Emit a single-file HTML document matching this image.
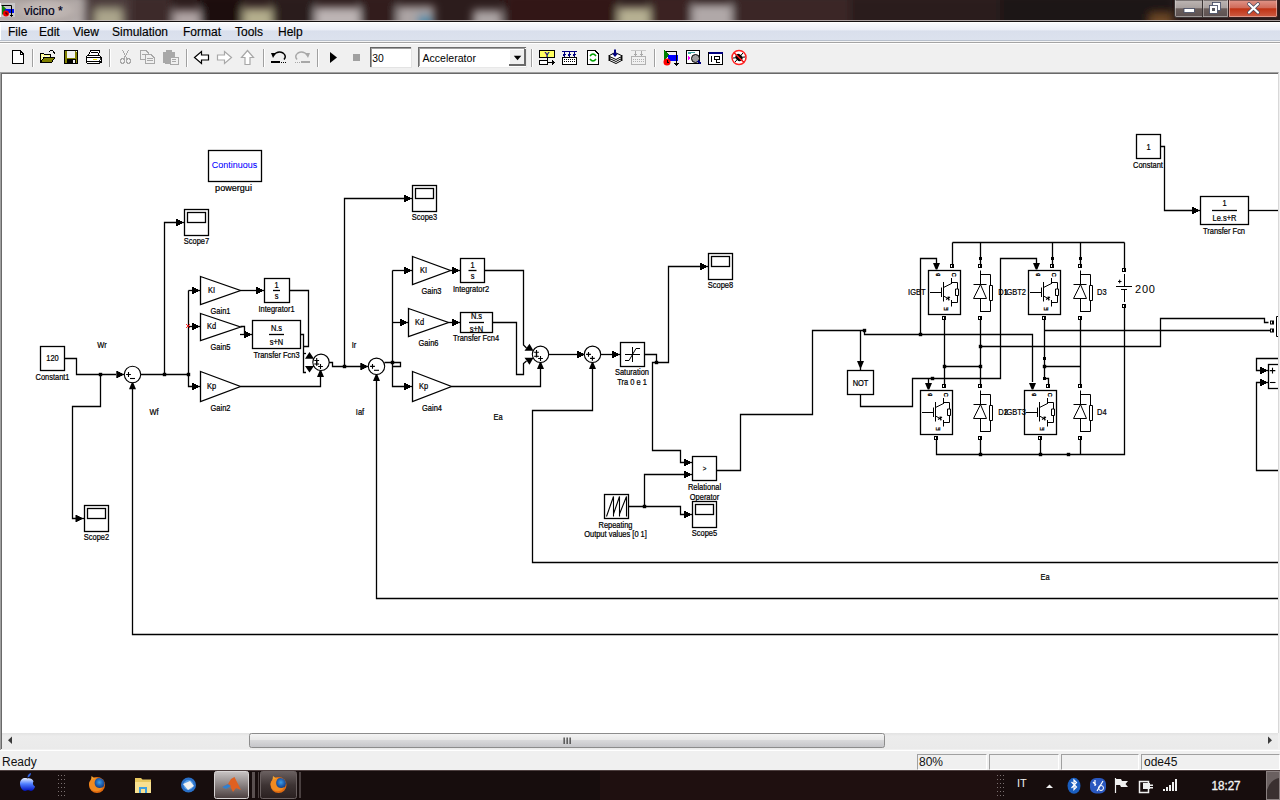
<!DOCTYPE html>
<html><head><meta charset="utf-8">
<style>
*{margin:0;padding:0;box-sizing:border-box}
html,body{width:1280px;height:800px;overflow:hidden;background:#f0f0f0;font-family:"Liberation Sans",sans-serif}
.abs{position:absolute}
#title{left:0;top:0;width:1280px;height:22px;background:#2a1a1a}
#title .t{left:24px;top:4px;font-size:12px;color:#000018;-webkit-text-stroke:0.2px #000018}
#menu{left:0;top:22px;width:1280px;height:19px;background:linear-gradient(#f8fafd 0,#eceff7 38%,#d9dfec 48%,#dce2ee 100%);border-top:1px solid #fff;border-bottom:1px solid #b8c0cc;box-shadow:inset 1px 0 0 #fff}
#menu span{position:absolute;top:2px;font-size:12px;color:#000;-webkit-text-stroke:0.15px #000}
#tool{left:0;top:41px;width:1280px;height:31px;background:#f0f0f0;border-top:1px solid #f4f4f4;box-shadow:inset 0 1px 0 #a4a4a4, inset 0 2px 0 #fff}
#canvas{left:0;top:72px;width:1279px;height:661px;background:#fff;border-top:1px solid #a0a0a0;border-left:1px solid #a0a0a0;border-right:1px solid #d8d8d8;box-shadow:inset 1px 1px 0 #696969}
#hscroll{left:2px;top:733px;width:1276px;height:17px;background:#ececec}
#status{left:0;top:750px;width:1280px;height:20px;background:#f0f0f0;border-top:1px solid #fff}
#status span{position:absolute;font-size:12px;color:#101010}
.pan{position:absolute;top:3px;height:16px;border:1px solid #c8c8c8;border-right-color:#fff;border-bottom-color:#fff;border-left-color:#a0a0a0;border-top-color:#a0a0a0}
#task{left:0;top:770px;width:1280px;height:30px;background:linear-gradient(90deg,#1c1010,#140c0c 500px,#1c1010 900px,#201212);border-top:1px solid #5a4a4a}
svg .f{fill:#000;stroke:none}
svg text{font-family:"Liberation Sans",sans-serif}
</style></head><body>
<div id="title" class="abs"><svg class="abs" style="left:0;top:0" width="1280" height="22" viewBox="0 0 1280 22"><defs><radialGradient id="glow" cx="0.5" cy="0.5" r="0.5"><stop offset="0" stop-color="#d4ccc8" stop-opacity="1"/><stop offset="0.6" stop-color="#c0b6b2" stop-opacity="0.85"/><stop offset="1" stop-color="#a09490" stop-opacity="0"/></radialGradient><linearGradient id="minb" x1="0" y1="0" x2="0" y2="1"><stop offset="0" stop-color="#bdb6b4"/><stop offset="0.45" stop-color="#a8a09e"/><stop offset="0.5" stop-color="#6a5e5c"/><stop offset="1" stop-color="#5c5050"/></linearGradient><linearGradient id="clsb" x1="0" y1="0" x2="0" y2="1"><stop offset="0" stop-color="#e0968a"/><stop offset="0.45" stop-color="#d06a58"/><stop offset="0.5" stop-color="#c03214"/><stop offset="1" stop-color="#d06048"/></linearGradient></defs><filter id="bl" x="-50%" y="-50%" width="200%" height="200%"><feGaussianBlur stdDeviation="4"/></filter><rect x="0" y="0" width="1280" height="21" fill="#2c1c1c"/><g filter="url(#bl)"><rect x="80" y="-6" width="52" height="40" fill="#4e3e3c"/><rect x="130" y="-6" width="42" height="40" fill="#3e2c2c"/><rect x="200" y="-6" width="42" height="40" fill="#1e1010"/><rect x="272" y="-6" width="42" height="40" fill="#2a1a1a"/><rect x="360" y="-6" width="36" height="40" fill="#301c1c"/><rect x="505" y="-6" width="112" height="40" fill="#301616"/><rect x="650" y="-6" width="42" height="40" fill="#3a2424"/><rect x="732" y="-6" width="118" height="40" fill="#3a2828"/><rect x="850" y="-6" width="150" height="40" fill="#2c1c1c"/><rect x="1000" y="-6" width="175" height="40" fill="#1e1212"/><rect x="-10" y="-6" width="94" height="40" fill="#b4acaa"/><rect x="95" y="9" width="27" height="25" fill="#aca68c"/><rect x="173" y="10" width="27" height="24" fill="#b0a4a4"/><rect x="243" y="8" width="29" height="26" fill="#b4ae8c"/><rect x="315" y="7" width="45" height="27" fill="#bcb4b4"/><rect x="397" y="6" width="37" height="28" fill="#aca4a4"/><rect x="418" y="15" width="14" height="19" fill="#4a8aa8"/><rect x="473" y="10" width="29" height="24" fill="#aca4a4"/><rect x="618" y="7" width="32" height="27" fill="#b6b092"/><rect x="692" y="4" width="40" height="30" fill="#b0a8a8"/><rect x="1150" y="14" width="22" height="20" fill="#704828"/></g><rect x="0" y="20" width="1280" height="1" fill="#c8c0c0" opacity="0.8"/><rect x="0" y="21" width="1280" height="1" fill="#141010"/><ellipse cx="46" cy="10" rx="40" ry="14" fill="url(#glow)" opacity="0.6"/><rect x="1" y="3" width="14" height="14" fill="#c8c8c8"/><rect x="0" y="3" width="1" height="14" fill="#fff"/><path d="M2,5 L2,15 L7,9.5 Z" fill="#108010"/><rect x="5" y="9" width="9" height="4" fill="#0010f0"/><circle cx="6" cy="13.5" r="3" fill="#f00000"/><path d="M1.5,5.5 L11.5,5.5 L11.5,16" fill="none" stroke="#000" stroke-width="1"/><path d="M10,15 L11.5,16.5 L13,15" fill="none" stroke="#000" stroke-width="1"/><path d="M6,12 L6,14 L8,14" fill="none" stroke="#000" stroke-width="0.8"/><path d="M1174.5,0 L1174.5,15.5 Q1174.5,17.5 1176.5,17.5 L1228.5,17.5 L1228.5,0 Z" fill="url(#minb)" stroke="#3a3434" stroke-width="1"/><path d="M1175.5,0 L1175.5,15.5 Q1175.5,16.5 1176.5,16.5 L1227.5,16.5 L1227.5,0" fill="none" stroke="#d8d4d2" stroke-width="0.8" opacity="0.7"/><path d="M1228.5,0 L1228.5,17.5 L1275.5,17.5 Q1277.5,17.5 1277.5,15.5 L1277.5,0 Z" fill="url(#clsb)" stroke="#3a2020" stroke-width="1"/><path d="M1229.5,0 L1229.5,16.5 L1275.5,16.5 Q1276.5,16.5 1276.5,15.5 L1276.5,0" fill="none" stroke="#f0c8c0" stroke-width="0.8" opacity="0.7"/><path d="M1202.5,0 L1202.5,17" stroke="#3a3434" stroke-width="1"/><path d="M1203.5,0 L1203.5,16.5" stroke="#d0ccca" stroke-width="0.8" opacity="0.6"/><rect x="1184" y="8.5" width="10.5" height="4" fill="#fff" stroke="#404860" stroke-width="0.8"/><rect x="1212.5" y="2.5" width="8" height="8" fill="#fff" stroke="#404860" stroke-width="0.8"/><rect x="1209.5" y="5.5" width="8" height="8" fill="#fff" stroke="#404860" stroke-width="0.8"/><rect x="1212" y="8" width="3" height="3" fill="#5a5a60"/><path d="M1249,4 L1258,12.5 M1258,4 L1249,12.5" stroke="#404860" stroke-width="3.6" stroke-linecap="round"/><path d="M1249,4 L1258,12.5 M1258,4 L1249,12.5" stroke="#fff" stroke-width="2.2" stroke-linecap="round"/></svg><div class="t abs">vicino *</div></div>
<div id="menu" class="abs">
<span style="left:8px">File</span><span style="left:39px">Edit</span><span style="left:73px">View</span><span style="left:112px">Simulation</span><span style="left:183px">Format</span><span style="left:235px">Tools</span><span style="left:278px">Help</span>
</div>
<div id="tool" class="abs"></div>
<svg class="abs" style="left:0;top:42px" width="1280" height="30" viewBox="0 42 1280 30" shape-rendering="crispEdges"><rect x="32" y="49" width="1" height="18" fill="#a0a0a0"/><rect x="33" y="49" width="1" height="18" fill="#fff"/><rect x="109" y="49" width="1" height="18" fill="#a0a0a0"/><rect x="110" y="49" width="1" height="18" fill="#fff"/><rect x="186" y="49" width="1" height="18" fill="#a0a0a0"/><rect x="187" y="49" width="1" height="18" fill="#fff"/><rect x="263" y="49" width="1" height="18" fill="#a0a0a0"/><rect x="264" y="49" width="1" height="18" fill="#fff"/><rect x="317" y="49" width="1" height="18" fill="#a0a0a0"/><rect x="318" y="49" width="1" height="18" fill="#fff"/><rect x="531" y="49" width="1" height="18" fill="#a0a0a0"/><rect x="532" y="49" width="1" height="18" fill="#fff"/><rect x="654" y="49" width="1" height="18" fill="#a0a0a0"/><rect x="655" y="49" width="1" height="18" fill="#fff"/><path d="M12.5,50.5 L20,50.5 L23.5,54 L23.5,63.5 L12.5,63.5 Z" fill="#fff" stroke="#000"/><path d="M20,50.5 L20,54 L23.5,54" fill="none" stroke="#000"/><path d="M40.5,62.5 L40.5,53.5 L43.5,53.5 L44.5,54.5 L50.5,54.5 L50.5,57.5 L44,57.5 Z" fill="#ffff90" stroke="#000"/><path d="M41.5,55 L43,55 M42,56.5 L43.5,56.5 M41.5,58 L43,58 M42,59.5 L43.5,59.5 M45,56 L49,56" stroke="#ffffff" stroke-width="0.8"/><path d="M40.5,62.5 L44,57.5 L55,57.5 L51.5,62.5 Z" fill="#808000" stroke="#000" stroke-linejoin="round"/><path d="M48.5,52.5 Q51,49 54,51.5" fill="none" stroke="#000" stroke-width="1"/><path d="M52,51.5 L55.5,51.5 L55,54.5 Z" fill="#000"/><rect x="64" y="50" width="14" height="14" fill="#000"/><rect x="65" y="51" width="12" height="12" fill="#808000"/><rect x="67" y="51" width="8" height="6.5" fill="#f0f0f0"/><rect x="66.5" y="58.5" width="9.5" height="5" fill="#000"/><rect x="73" y="60" width="2" height="2.5" fill="#f0f0f0"/><rect x="76" y="51" width="1" height="1" fill="#f0f0f0"/><path d="M90.5,50.5 L99.5,50.5 L98.5,55.5 L88.5,55.5 Z" fill="#fff" stroke="#000"/><path d="M91,52.5 L97.5,52.5" stroke="#000"/><path d="M87.5,55.5 L99.5,55.5 L101.5,58 L101.5,62 L99.5,63.5 L87.5,63.5 L86,62 L86,58 Z" fill="#fff" stroke="#000"/><rect x="86" y="57" width="16" height="1.2" fill="#000"/><rect x="86" y="60.5" width="16" height="1.2" fill="#000"/><rect x="93" y="59" width="4" height="1.3" fill="#f0e000"/><path d="M99,57 L101,59 L99,61 M101,61 L99.5,63" stroke="#000" fill="none" stroke-width="0.8"/><g fill="none" stroke="#a8a8a8"><path d="M122.5,50 L127,58.5 M128.5,50 L124,58.5"/><circle cx="122.5" cy="61" r="2.2"/><circle cx="128.5" cy="61" r="2.2"/></g><g fill="#f0f0f0" stroke="#a8a8a8"><path d="M140.5,50.5 L146,50.5 L148.5,53 L148.5,59.5 L140.5,59.5 Z"/><path d="M145.5,54.5 L151,54.5 L154.5,58 L154.5,63.5 L145.5,63.5 Z"/></g><rect x="142" y="54" width="5" height="1" fill="#a8a8a8"/><rect x="147" y="58" width="6" height="1" fill="#a8a8a8"/><rect x="147" y="60" width="6" height="1" fill="#a8a8a8"/><rect x="163" y="51.5" width="12" height="12" rx="1.5" fill="#a8a8a8"/><rect x="166" y="50" width="6" height="3" fill="#a8a8a8"/><rect x="170" y="57" width="8" height="7" fill="#f0f0f0" stroke="#a8a8a8"/><rect x="172" y="59" width="4" height="1" fill="#a8a8a8"/><rect x="172" y="61" width="4" height="1" fill="#a8a8a8"/><path d="M194.5,57.5 L201.5,51.5 L201.5,55 L208.5,55 L208.5,60 L201.5,60 L201.5,63.5 Z" fill="#fff" stroke="#000" stroke-width="1.2" shape-rendering="auto"/><path d="M231.5,57.5 L224.5,51.5 L224.5,55 L217.5,55 L217.5,60 L224.5,60 L224.5,63.5 Z" fill="#fff" stroke="#a8a8a8" stroke-width="1.2" shape-rendering="auto"/><path d="M247.5,50.5 L253.5,57.5 L250,57.5 L250,64.5 L245,64.5 L245,57.5 L241.5,57.5 Z" fill="#fff" stroke="#a8a8a8" stroke-width="1.2" shape-rendering="auto"/><path d="M273,55.5 Q278,50 283,53 Q287,56 284,59.5" fill="none" stroke="#000" stroke-width="1.5" shape-rendering="auto"/><path d="M271,53 L276,53 L273,58 Z" fill="#000" shape-rendering="auto"/><rect x="271" y="61" width="9" height="2" fill="#000"/><rect x="281" y="62" width="1" height="1" fill="#000"/><rect x="283" y="62" width="1" height="1" fill="#000"/><rect x="285" y="62" width="1" height="1" fill="#000"/><path d="M308,55.5 Q303,50 298,53 Q294,56 297,59.5" fill="none" stroke="#a8a8a8" stroke-width="1.5" shape-rendering="auto"/><path d="M310,53 L305,53 L308,58 Z" fill="#a8a8a8" shape-rendering="auto"/><rect x="301" y="61" width="9" height="2" fill="#a8a8a8"/><rect x="295" y="62" width="1" height="1" fill="#a8a8a8"/><rect x="297" y="62" width="1" height="1" fill="#a8a8a8"/><rect x="299" y="62" width="1" height="1" fill="#a8a8a8"/><path d="M330,52 L337,57.5 L330,63 Z" fill="#000" shape-rendering="auto"/><rect x="353" y="54" width="7" height="7" fill="#a0a0a0"/><rect x="370" y="47" width="42" height="21" fill="#fff"/><rect x="370" y="47" width="42" height="1" fill="#646464"/><rect x="370" y="47" width="1" height="21" fill="#646464"/><rect x="371" y="48" width="40" height="1" fill="#a0a0a0"/><rect x="371" y="48" width="1" height="19" fill="#a0a0a0"/><rect x="411" y="47" width="1" height="21" fill="#e3e3e3"/><rect x="370" y="67" width="42" height="1" fill="#e3e3e3"/><text transform="translate(372.3,62) scale(0.9,1)" font-size="11.5" fill="#000" font-family="Liberation Sans">30</text><rect x="418" y="47" width="109" height="21" fill="#fff"/><rect x="418" y="47" width="108" height="1" fill="#6e6e6e"/><rect x="418" y="48" width="107" height="1" fill="#a0a0a0"/><rect x="418" y="47" width="1" height="20" fill="#6e6e6e"/><rect x="419" y="48" width="1" height="18" fill="#a0a0a0"/><rect x="418" y="67" width="109" height="1" fill="#e8e8e8"/><rect x="526" y="47" width="1" height="21" fill="#e8e8e8"/><rect x="509" y="49" width="17" height="17" fill="#f0f0f0"/><rect x="509" y="49" width="15" height="1" fill="#fff"/><rect x="509" y="49" width="1" height="15" fill="#fff"/><rect x="509" y="64" width="17" height="2" fill="#6a6a6a"/><rect x="524" y="49" width="2" height="17" fill="#6a6a6a"/><path d="M513.8,55.7 L521.3,55.7 L517.5,60.2 Z" fill="#000" shape-rendering="auto"/><text transform="translate(422.5,62) scale(0.92,1)" font-size="11.5" fill="#000" font-family="Liberation Sans">Accelerator</text><rect x="539.5" y="50.5" width="15" height="7" fill="#ffff60" stroke="#000"/><text x="547" y="57.3" font-size="8" font-weight="bold" fill="#000080" text-anchor="middle" font-family="Liberation Sans">Y</text><rect x="539.5" y="60.5" width="8" height="4" fill="#fff" stroke="#000"/><path d="M547.5,62.5 L553,62.5" stroke="#000"/><path d="M552,60 L555,62.5 L552,65 Z" fill="#000"/><path d="M547,57.5 L547,60" stroke="#000"/><rect x="562.5" y="57.5" width="14" height="7" fill="#fff" stroke="#000"/><rect x="564" y="59" width="1" height="1" fill="#000"/><rect x="564" y="61" width="1" height="1" fill="#000"/><rect x="566" y="59" width="1" height="1" fill="#000"/><rect x="566" y="61" width="1" height="1" fill="#000"/><rect x="568" y="59" width="1" height="1" fill="#000"/><rect x="568" y="61" width="1" height="1" fill="#000"/><rect x="570" y="59" width="1" height="1" fill="#000"/><rect x="570" y="61" width="1" height="1" fill="#000"/><rect x="572" y="59" width="1" height="1" fill="#000"/><rect x="572" y="61" width="1" height="1" fill="#000"/><rect x="574" y="59" width="1" height="1" fill="#000"/><rect x="574" y="61" width="1" height="1" fill="#000"/><rect x="564" y="51" width="1" height="5" fill="#000080"/><path d="M562.5,54 L566.5,54 L564.5,57 Z" fill="#000080"/><rect x="569" y="51" width="1" height="5" fill="#000080"/><path d="M567.5,54 L571.5,54 L569.5,57 Z" fill="#000080"/><rect x="574" y="51" width="1" height="5" fill="#000080"/><path d="M572.5,54 L576.5,54 L574.5,57 Z" fill="#000080"/><rect x="562" y="51" width="15" height="1" fill="#000080"/><path d="M587.5,50.5 L595,50.5 L598.5,54 L598.5,64.5 L587.5,64.5 Z" fill="#fff" stroke="#000"/><path d="M590,56 Q593,52 596,56 M596,59 Q593,63 590,59" fill="none" stroke="#00a000" stroke-width="1.5" shape-rendering="auto"/><g shape-rendering="auto"><path d="M608.5,60 L615,56.5 L622.5,60 L616,63.5 Z" fill="#fff" stroke="#000"/><path d="M608.5,58 L615,54.5 L622.5,58 L616,61.5 Z" fill="#fff" stroke="#000"/><path d="M608.5,56 L615,52.5 L622.5,56 L616,59.5 Z" fill="#fff" stroke="#000"/><path d="M615,49.5 L615,55" stroke="#000080" stroke-width="2"/><path d="M612,53.5 L618,53.5 L615,57 Z" fill="#000080"/></g><rect x="631.5" y="56.5" width="14" height="8" fill="#f0f0f0" stroke="#b0b0b0"/><rect x="631" y="50" width="15" height="1" fill="#c8c8c8"/><rect x="634.8" y="51" width="1.4" height="3" fill="#a8a8a8"/><path d="M633.0,53.5 L638.0,53.5 L635.5,56.5 Z" fill="#a8a8a8"/><rect x="640.8" y="51" width="1.4" height="3" fill="#a8a8a8"/><path d="M639.0,53.5 L644.0,53.5 L641.5,56.5 Z" fill="#a8a8a8"/><rect x="633" y="59" width="1" height="1" fill="#b0b0b0"/><rect x="633" y="61" width="1" height="1" fill="#b0b0b0"/><rect x="635" y="59" width="1" height="1" fill="#b0b0b0"/><rect x="635" y="61" width="1" height="1" fill="#b0b0b0"/><rect x="637" y="59" width="1" height="1" fill="#b0b0b0"/><rect x="637" y="61" width="1" height="1" fill="#b0b0b0"/><rect x="639" y="59" width="1" height="1" fill="#b0b0b0"/><rect x="639" y="61" width="1" height="1" fill="#b0b0b0"/><rect x="641" y="59" width="1" height="1" fill="#b0b0b0"/><rect x="641" y="61" width="1" height="1" fill="#b0b0b0"/><rect x="643" y="59" width="1" height="1" fill="#b0b0b0"/><rect x="643" y="61" width="1" height="1" fill="#b0b0b0"/><path d="M664,50 L664,60 L670,55 Z" fill="#008000"/><rect x="668" y="55" width="10" height="6" fill="#0000ff"/><path d="M665.5,51.5 L676.5,51.5 L676.5,64" fill="none" stroke="#000"/><circle cx="667" cy="62" r="3.5" fill="#ff0000" shape-rendering="auto"/><path d="M667,60 L667,62 L669,62" stroke="#000" fill="none"/><path d="M674.5,63 L676.5,65 L678.5,63" fill="none" stroke="#000"/><rect x="686.5" y="50.5" width="13" height="13" fill="#fff" stroke="#000"/><rect x="688" y="52" width="3" height="2" fill="#40a0a0"/><rect x="691" y="52" width="4" height="1" fill="#40a0a0"/><path d="M688,56 L691,58 L688,60 Z" fill="#ff00ff"/><circle cx="695.5" cy="58.5" r="4" fill="#a0a0a0" stroke="#000" shape-rendering="auto"/><path d="M698,61 L701,64" stroke="#000080" stroke-width="1.5"/><rect x="708.5" y="52.5" width="14" height="12" fill="#fff" stroke="#000"/><rect x="709" y="52" width="14" height="2" fill="#000080"/><path d="M711,56 L711,62 M714.5,56.5 L719.5,56.5 L719.5,59.5 L714.5,59.5 Z M716,59.5 L716,62.5 L720,62.5" fill="none" stroke="#000"/><g shape-rendering="auto"><circle cx="739" cy="57.5" r="7" fill="#fff" stroke="#ff2020" stroke-width="1.5"/><ellipse cx="739" cy="57.5" rx="3" ry="4" fill="#000" transform="rotate(-40 739 57.5)"/><path d="M734,53 L744,62 M733,58 L745,57 M735,62 L743,53" stroke="#000" stroke-width="1"/><path d="M734,52.5 L744,62.5" stroke="#ff2020" stroke-width="1.5"/></g></svg>
<div id="canvas" class="abs"></div>
<svg class="abs" style="left:0;top:733px" width="1280" height="17" viewBox="0 733 1280 17"><defs><linearGradient id="thb" x1="0" y1="0" x2="0" y2="1"><stop offset="0" stop-color="#f4f4f4"/><stop offset="0.45" stop-color="#e8e8e8"/><stop offset="0.5" stop-color="#d8d8da"/><stop offset="1" stop-color="#c4c4c8"/></linearGradient><linearGradient id="trk" x1="0" y1="0" x2="0" y2="1"><stop offset="0" stop-color="#e2e2e2"/><stop offset="0.2" stop-color="#ececec"/><stop offset="1" stop-color="#eaeaea"/></linearGradient></defs><rect x="0" y="733" width="1280" height="17" fill="#f0f0f0"/><rect x="2" y="733" width="1276" height="16" fill="url(#trk)"/><rect x="0" y="733" width="1" height="17" fill="#a0a0a0"/><rect x="1" y="733" width="1" height="16" fill="#696969"/><path d="M8,740.3 L12,736.5 L12,744 Z" fill="#3a3a3a"/><path d="M1272,740.3 L1268,736.5 L1268,744 Z" fill="#3a3a3a"/><rect x="249.5" y="733.5" width="635" height="14" rx="2" fill="url(#thb)" stroke="#8c8c8c" stroke-width="1"/><rect x="563.5" y="737.5" width="1.3" height="6.5" fill="#404040"/><rect x="566.5" y="737.5" width="1.3" height="6.5" fill="#404040"/><rect x="569.5" y="737.5" width="1.3" height="6.5" fill="#404040"/></svg>
<svg class="abs" style="left:0;top:0" width="1280" height="800" viewBox="0 0 1280 800"><defs><clipPath id="cp"><rect x="2" y="74" width="1276" height="659"/></clipPath></defs><g clip-path="url(#cp)" fill="none" stroke="#000" stroke-width="1.3"><rect x="208.5" y="150.5" width="53.0" height="31.0"/>
<text transform="translate(234.5,168) scale(1.02,1)" x="0" y="0" font-size="8.8" text-anchor="middle" fill="#0000ff" stroke="#0000ff" stroke-width="0.05" >Continuous</text>
<text transform="translate(233.5,191) scale(1.08,1)" x="0" y="0" font-size="8.4" text-anchor="middle" fill="#000" stroke="#000" stroke-width="0.2" >powergui</text>
<rect x="40.5" y="346.5" width="24.0" height="24.0"/>
<text transform="translate(52.5,361) scale(0.89,1)" x="0" y="0" font-size="8.4" text-anchor="middle" fill="#000" stroke="#000" stroke-width="0.22" >120</text>
<text transform="translate(52.5,380) scale(0.89,1)" x="0" y="0" font-size="8.4" text-anchor="middle" fill="#000" stroke="#000" stroke-width="0.22" >Constant1</text>
<path d="M64.5,358.5 L76.5,358.5 L76.5,374.5 L116,374.5" />
<path class="f" d="M122.30,376.00 L120.30,376.00 L120.30,377.00 L118.30,377.00 L118.30,378.00 L116.30,378.00 L116.30,371.00 L118.30,371.00 L118.30,372.00 L120.30,372.00 L120.30,373.00 L122.30,373.00 Z"/>
<path d="M121.30,374.50 L124.30,374.50"/>
<rect class="f" x="98.80" y="372.80" width="3.40" height="3.40"/>
<path d="M100.5,374.5 L100.5,406.5 L72.5,406.5 L72.5,518.5 L78,518.5" />
<path class="f" d="M81.50,520.00 L79.50,520.00 L79.50,521.00 L77.50,521.00 L77.50,522.00 L75.50,522.00 L75.50,515.00 L77.50,515.00 L77.50,516.00 L79.50,516.00 L79.50,517.00 L81.50,517.00 Z"/>
<path d="M80.50,518.50 L84.00,518.50"/>
<rect x="84.5" y="505.5" width="24.0" height="26.0"/>
<rect x="87.5" y="508.5" width="18.0" height="10.0"/>
<text transform="translate(96.5,539.5) scale(0.89,1)" x="0" y="0" font-size="8.4" text-anchor="middle" fill="#000" stroke="#000" stroke-width="0.22" >Scope2</text>
<circle cx="132.5" cy="374.5" r="8.2" stroke-width="1.1"/>
<path d="M126.1,374.5 L130.9,374.5 M128.5,372.1 L128.5,376.9" stroke-width="1.1"/>
<path d="M130,378.5 L135,378.5" stroke-width="1.1"/>
<path d="M132.5,385 L132.5,634.5 L1278,634.5" />
<path class="f" d="M133.30,382.80 L136.00,389.30 L129.00,389.30 L131.70,382.80 Z"/>
<text transform="translate(102,348) scale(0.89,1)" x="0" y="0" font-size="8.4" text-anchor="middle" fill="#000" stroke="#000" stroke-width="0.22" >Wr</text>
<text transform="translate(154,415) scale(0.89,1)" x="0" y="0" font-size="8.4" text-anchor="middle" fill="#000" stroke="#000" stroke-width="0.22" >Wf</text>
<path d="M141,374.5 L188.5,374.5" />
<rect class="f" x="162.80" y="372.80" width="3.40" height="3.40"/>
<rect class="f" x="186.80" y="372.80" width="3.40" height="3.40"/>
<path d="M164.5,374.5 L164.5,222.5 L178,222.5" />
<path class="f" d="M182.00,224.00 L180.00,224.00 L180.00,225.00 L178.00,225.00 L178.00,226.00 L176.00,226.00 L176.00,219.00 L178.00,219.00 L178.00,220.00 L180.00,220.00 L180.00,221.00 L182.00,221.00 Z"/>
<path d="M181.00,222.50 L184.50,222.50"/>
<rect x="184.5" y="209.5" width="24.0" height="26.0"/>
<rect x="187.5" y="212.5" width="18.0" height="10.0"/>
<text transform="translate(196.5,243.5) scale(0.89,1)" x="0" y="0" font-size="8.4" text-anchor="middle" fill="#000" stroke="#000" stroke-width="0.22" >Scope7</text>
<path d="M188.5,290.5 L188.5,386.5 L194,386.5" />
<path d="M188.5,290.5 L194,290.5" />
<path class="f" d="M198.00,292.00 L196.00,292.00 L196.00,293.00 L194.00,293.00 L194.00,294.00 L192.00,294.00 L192.00,287.00 L194.00,287.00 L194.00,288.00 L196.00,288.00 L196.00,289.00 L198.00,289.00 Z"/>
<path d="M197.00,290.50 L200.50,290.50"/>
<path d="M188.5,326.5 L194,326.5" />
<path class="f" d="M198.00,328.00 L196.00,328.00 L196.00,329.00 L194.00,329.00 L194.00,330.00 L192.00,330.00 L192.00,323.00 L194.00,323.00 L194.00,324.00 L196.00,324.00 L196.00,325.00 L198.00,325.00 Z"/>
<path d="M197.00,326.50 L200.50,326.50"/>
<path class="f" d="M198.00,388.00 L196.00,388.00 L196.00,389.00 L194.00,389.00 L194.00,390.00 L192.00,390.00 L192.00,383.00 L194.00,383.00 L194.00,384.00 L196.00,384.00 L196.00,385.00 L198.00,385.00 Z"/>
<path d="M197.00,386.50 L200.50,386.50"/>
<path d="M186,324 L190,328 M190,324 L186,328" stroke="#ff0000" stroke-width="0.8"/>
<path d="M200.5,276.5 L240.5,290.5 L200.5,304.5 Z"/>
<text transform="translate(211.5,292.9) scale(0.89,1)" x="0" y="0" font-size="8.4" text-anchor="middle" fill="#000" stroke="#000" stroke-width="0.22" >KI</text>
<text transform="translate(220.5,314) scale(0.89,1)" x="0" y="0" font-size="8.4" text-anchor="middle" fill="#000" stroke="#000" stroke-width="0.22" >Gain1</text>
<path d="M200.5,313.5 L240.5,327.0 L200.5,340.5 Z"/>
<text transform="translate(211.5,329.4) scale(0.89,1)" x="0" y="0" font-size="8.4" text-anchor="middle" fill="#000" stroke="#000" stroke-width="0.22" >Kd</text>
<text transform="translate(220.5,350) scale(0.89,1)" x="0" y="0" font-size="8.4" text-anchor="middle" fill="#000" stroke="#000" stroke-width="0.22" >Gain5</text>
<path d="M200.5,371.5 L240.5,386.5 L200.5,401.5 Z"/>
<text transform="translate(211.5,388.9) scale(0.89,1)" x="0" y="0" font-size="8.4" text-anchor="middle" fill="#000" stroke="#000" stroke-width="0.22" >Kp</text>
<text transform="translate(220.5,411) scale(0.89,1)" x="0" y="0" font-size="8.4" text-anchor="middle" fill="#000" stroke="#000" stroke-width="0.22" >Gain2</text>
<path d="M240.5,290.5 L258,290.5" />
<path class="f" d="M262.00,292.00 L260.00,292.00 L260.00,293.00 L258.00,293.00 L258.00,294.00 L256.00,294.00 L256.00,287.00 L258.00,287.00 L258.00,288.00 L260.00,288.00 L260.00,289.00 L262.00,289.00 Z"/>
<path d="M261.00,290.50 L264.50,290.50"/>
<rect x="264.5" y="278.5" width="25.0" height="24.0"/>
<text transform="translate(276.5,288) scale(0.89,1)" x="0" y="0" font-size="8.4" text-anchor="middle" fill="#000" stroke="#000" stroke-width="0.22" >1</text>
<path d="M273,290.5 L280,290.5" />
<text transform="translate(276.5,299) scale(0.89,1)" x="0" y="0" font-size="8.4" text-anchor="middle" fill="#000" stroke="#000" stroke-width="0.22" >s</text>
<text transform="translate(276.5,312) scale(0.89,1)" x="0" y="0" font-size="8.4" text-anchor="middle" fill="#000" stroke="#000" stroke-width="0.22" >Integrator1</text>
<path d="M240.5,326.5 L244.5,326.5 L244.5,334.5" />
<path d="M240,334.5 L246,334.5" />
<path class="f" d="M250.00,336.00 L248.00,336.00 L248.00,337.00 L246.00,337.00 L246.00,338.00 L244.00,338.00 L244.00,331.00 L246.00,331.00 L246.00,332.00 L248.00,332.00 L248.00,333.00 L250.00,333.00 Z"/>
<path d="M249.00,334.50 L252.50,334.50"/>
<rect x="252.5" y="320.5" width="48.0" height="28.0"/>
<text transform="translate(276.5,331) scale(0.89,1)" x="0" y="0" font-size="8.4" text-anchor="middle" fill="#000" stroke="#000" stroke-width="0.22" >N.s</text>
<path d="M269,334.5 L284,334.5" />
<text transform="translate(276.5,345) scale(0.89,1)" x="0" y="0" font-size="8.4" text-anchor="middle" fill="#000" stroke="#000" stroke-width="0.22" >s+N</text>
<text transform="translate(276.5,358) scale(0.89,1)" x="0" y="0" font-size="8.4" text-anchor="middle" fill="#000" stroke="#000" stroke-width="0.22" >Transfer Fcn3</text>
<path d="M289.5,290.5 L308.5,290.5 L308.5,346.5 L303.5,346.5" />
<path d="M300.5,334.5 L303.5,334.5 L303.5,372.5 L306,372.5" />
<path d="M303.5,353.5 L306,353.5" />
<path class="f" d="M309.5,352 L305,358.8 L314,358.8 Z"/>
<path class="f" d="M309.5,372.5 L305,366 L314,366 Z"/>
<path d="M240.5,386.5 L320.5,386.5 L320.5,373" />
<path class="f" d="M321.30,370.60 L324.00,377.10 L317.00,377.10 L319.70,370.60 Z"/>
<circle cx="321" cy="362.3" r="8.2" stroke-width="1.1"/>
<path d="M314.3,360.5 L319.09999999999997,360.5 M316.7,358.1 L316.7,362.9" stroke-width="1.1"/>
<path d="M314.3,364 L319.1,364" stroke-width="1.1"/>
<path d="M316.7,360.5 L316.7,365.8" />
<path d="M318.1,366.5 L322.9,366.5 M320.5,364.1 L320.5,368.9" stroke-width="1.1"/>
<path d="M329,362.5 L332.5,362.5 L332.5,366.5 L362,366.5" />
<path class="f" d="M366.30,368.00 L364.30,368.00 L364.30,369.00 L362.30,369.00 L362.30,370.00 L360.30,370.00 L360.30,363.00 L362.30,363.00 L362.30,364.00 L364.30,364.00 L364.30,365.00 L366.30,365.00 Z"/>
<path d="M365.30,366.50 L368.30,366.50"/>
<rect class="f" x="342.80" y="364.80" width="3.40" height="3.40"/>
<path d="M344.5,366.5 L344.5,198.5 L406,198.5" />
<path class="f" d="M410.00,200.00 L408.00,200.00 L408.00,201.00 L406.00,201.00 L406.00,202.00 L404.00,202.00 L404.00,195.00 L406.00,195.00 L406.00,196.00 L408.00,196.00 L408.00,197.00 L410.00,197.00 Z"/>
<path d="M409.00,198.50 L412.50,198.50"/>
<rect x="412.5" y="185.5" width="24.0" height="26.0"/>
<rect x="415.5" y="188.5" width="18.0" height="10.0"/>
<text transform="translate(424.5,219.5) scale(0.89,1)" x="0" y="0" font-size="8.4" text-anchor="middle" fill="#000" stroke="#000" stroke-width="0.22" >Scope3</text>
<text transform="translate(354,348) scale(0.89,1)" x="0" y="0" font-size="8.4" text-anchor="middle" fill="#000" stroke="#000" stroke-width="0.22" >Ir</text>
<text transform="translate(360,415) scale(0.89,1)" x="0" y="0" font-size="8.4" text-anchor="middle" fill="#000" stroke="#000" stroke-width="0.22" >Iaf</text>
<circle cx="376.5" cy="366.3" r="8.2" stroke-width="1.1"/>
<path d="M370.1,366.4 L374.9,366.4 M372.5,364.0 L372.5,368.79999999999995" stroke-width="1.1"/>
<path d="M374,370.3 L379,370.3" stroke-width="1.1"/>
<path d="M376.5,377 L376.5,598.5 L1278,598.5" />
<path class="f" d="M377.30,374.60 L380.00,381.10 L373.00,381.10 L375.70,374.60 Z"/>
<path d="M384.5,362.5 L400.5,362.5 L400.5,366.5 L392.5,366.5" />
<rect class="f" x="390.80" y="360.80" width="3.40" height="3.40"/>
<path d="M392.5,270.5 L392.5,386.5 L406,386.5" />
<path d="M392.5,270.5 L406,270.5" />
<path class="f" d="M410.00,272.00 L408.00,272.00 L408.00,273.00 L406.00,273.00 L406.00,274.00 L404.00,274.00 L404.00,267.00 L406.00,267.00 L406.00,268.00 L408.00,268.00 L408.00,269.00 L410.00,269.00 Z"/>
<path d="M409.00,270.50 L412.50,270.50"/>
<path d="M392.5,322.5 L402,322.5" />
<path class="f" d="M406.00,324.00 L404.00,324.00 L404.00,325.00 L402.00,325.00 L402.00,326.00 L400.00,326.00 L400.00,319.00 L402.00,319.00 L402.00,320.00 L404.00,320.00 L404.00,321.00 L406.00,321.00 Z"/>
<path d="M405.00,322.50 L408.50,322.50"/>
<path class="f" d="M410.00,388.00 L408.00,388.00 L408.00,389.00 L406.00,389.00 L406.00,390.00 L404.00,390.00 L404.00,383.00 L406.00,383.00 L406.00,384.00 L408.00,384.00 L408.00,385.00 L410.00,385.00 Z"/>
<path d="M409.00,386.50 L412.50,386.50"/>
<path d="M412.5,256.5 L450.5,270.5 L412.5,284.5 Z"/>
<text transform="translate(423.5,272.9) scale(0.89,1)" x="0" y="0" font-size="8.4" text-anchor="middle" fill="#000" stroke="#000" stroke-width="0.22" >KI</text>
<text transform="translate(431.5,294) scale(0.89,1)" x="0" y="0" font-size="8.4" text-anchor="middle" fill="#000" stroke="#000" stroke-width="0.22" >Gain3</text>
<path d="M408.5,308.5 L448.5,322.5 L408.5,336.5 Z"/>
<text transform="translate(419.5,324.9) scale(0.89,1)" x="0" y="0" font-size="8.4" text-anchor="middle" fill="#000" stroke="#000" stroke-width="0.22" >Kd</text>
<text transform="translate(428.5,346) scale(0.89,1)" x="0" y="0" font-size="8.4" text-anchor="middle" fill="#000" stroke="#000" stroke-width="0.22" >Gain6</text>
<path d="M412.5,371.5 L451.5,386.5 L412.5,401.5 Z"/>
<text transform="translate(423.5,388.9) scale(0.89,1)" x="0" y="0" font-size="8.4" text-anchor="middle" fill="#000" stroke="#000" stroke-width="0.22" >Kp</text>
<text transform="translate(432.0,411) scale(0.89,1)" x="0" y="0" font-size="8.4" text-anchor="middle" fill="#000" stroke="#000" stroke-width="0.22" >Gain4</text>
<path d="M450.5,270.5 L454,270.5" />
<path class="f" d="M458.00,272.00 L456.00,272.00 L456.00,273.00 L454.00,273.00 L454.00,274.00 L452.00,274.00 L452.00,267.00 L454.00,267.00 L454.00,268.00 L456.00,268.00 L456.00,269.00 L458.00,269.00 Z"/>
<path d="M457.00,270.50 L460.50,270.50"/>
<rect x="460.5" y="258.5" width="24.0" height="24.0"/>
<text transform="translate(472.5,268) scale(0.89,1)" x="0" y="0" font-size="8.4" text-anchor="middle" fill="#000" stroke="#000" stroke-width="0.22" >1</text>
<path d="M468.5,270.5 L476.5,270.5" />
<text transform="translate(472.5,279) scale(0.89,1)" x="0" y="0" font-size="8.4" text-anchor="middle" fill="#000" stroke="#000" stroke-width="0.22" >s</text>
<text transform="translate(471,292) scale(0.89,1)" x="0" y="0" font-size="8.4" text-anchor="middle" fill="#000" stroke="#000" stroke-width="0.22" >Integrator2</text>
<path d="M448.5,322.5 L454,322.5" />
<path class="f" d="M458.00,324.00 L456.00,324.00 L456.00,325.00 L454.00,325.00 L454.00,326.00 L452.00,326.00 L452.00,319.00 L454.00,319.00 L454.00,320.00 L456.00,320.00 L456.00,321.00 L458.00,321.00 Z"/>
<path d="M457.00,322.50 L460.50,322.50"/>
<rect x="460.5" y="312.5" width="32.0" height="20.0"/>
<text transform="translate(476.5,319.2) scale(0.89,1)" x="0" y="0" font-size="8.4" text-anchor="middle" fill="#000" stroke="#000" stroke-width="0.22" >N.s</text>
<path d="M469,322.5 L484,322.5" />
<text transform="translate(476.5,331.5) scale(0.89,1)" x="0" y="0" font-size="8.4" text-anchor="middle" fill="#000" stroke="#000" stroke-width="0.22" >s+N</text>
<text transform="translate(476,341) scale(0.89,1)" x="0" y="0" font-size="8.4" text-anchor="middle" fill="#000" stroke="#000" stroke-width="0.22" >Transfer Fcn4</text>
<path d="M484.5,270.5 L523.5,270.5 L523.5,345 L526.5,348" />
<path class="f" d="M529.5,343.8 L524.5,350.8 L533.5,350.8 Z"/>
<path d="M492.5,322.5 L516.5,322.5 L516.5,374.5 L523.5,374.5 L523.5,363.5 L526.5,361" />
<path class="f" d="M529.5,364.8 L524.5,357.8 L533.5,357.8 Z"/>
<path d="M451.5,386.5 L540.5,386.5 L540.5,365" />
<path class="f" d="M541.30,362.60 L544.00,369.10 L537.00,369.10 L539.70,362.60 Z"/>
<circle cx="540.5" cy="354.3" r="8.2" stroke-width="1.1"/>
<path d="M534.1,352.3 L538.9,352.3 M536.5,349.90000000000003 L536.5,354.7" stroke-width="1.1"/>
<path d="M534.2,356.3 L538.8,356.3" stroke-width="1.1"/>
<path d="M536.5,352.3 L536.5,357.5" />
<path d="M538.1,358.5 L542.9,358.5 M540.5,356.1 L540.5,360.9" stroke-width="1.1"/>
<path d="M548.7,354.5 L577,354.5" />
<path class="f" d="M583.00,356.00 L581.00,356.00 L581.00,357.00 L579.00,357.00 L579.00,358.00 L577.00,358.00 L577.00,351.00 L579.00,351.00 L579.00,352.00 L581.00,352.00 L581.00,353.00 L583.00,353.00 Z"/>
<path d="M582.00,354.50 L584.00,354.50"/>
<text transform="translate(498,420) scale(0.89,1)" x="0" y="0" font-size="8.4" text-anchor="middle" fill="#000" stroke="#000" stroke-width="0.22" >Ea</text>
<circle cx="592.5" cy="354.3" r="8.2" stroke-width="1.1"/>
<path d="M586.1,354.4 L590.9,354.4 M588.5,352.0 L588.5,356.79999999999995" stroke-width="1.1"/>
<path d="M590.0,358.4 L594.8,358.4 M592.4,356.0 L592.4,360.79999999999995" stroke-width="1.1"/>
<path d="M592.5,365 L592.5,410.5 L532.5,410.5 L532.5,562.5 L1278,562.5" />
<path class="f" d="M593.30,362.60 L596.00,369.10 L589.00,369.10 L591.70,362.60 Z"/>
<path d="M600.8,354.5 L614,354.5" />
<path class="f" d="M618.00,356.00 L616.00,356.00 L616.00,357.00 L614.00,357.00 L614.00,358.00 L612.00,358.00 L612.00,351.00 L614.00,351.00 L614.00,352.00 L616.00,352.00 L616.00,353.00 L618.00,353.00 Z"/>
<path d="M617.00,354.50 L620.50,354.50"/>
<rect x="620.5" y="342.5" width="24.0" height="24.0"/>
<path d="M625,354.5 L640,354.5 M632.5,347 L632.5,362 M625,360.5 L629,360.5 L636,348.5 L640,348.5" stroke-width="1"/>
<text transform="translate(632,375) scale(0.89,1)" x="0" y="0" font-size="8.4" text-anchor="middle" fill="#000" stroke="#000" stroke-width="0.22" >Saturation</text>
<text transform="translate(632,384.5) scale(0.89,1)" x="0" y="0" font-size="8.4" text-anchor="middle" fill="#000" stroke="#000" stroke-width="0.22" >Tra 0 e 1</text>
<path d="M644.5,354.5 L656.5,354.5 L656.5,362.5 L668.5,362.5 L668.5,266.5 L702,266.5" />
<path class="f" d="M706.00,268.00 L704.00,268.00 L704.00,269.00 L702.00,269.00 L702.00,270.00 L700.00,270.00 L700.00,263.00 L702.00,263.00 L702.00,264.00 L704.00,264.00 L704.00,265.00 L706.00,265.00 Z"/>
<path d="M705.00,266.50 L708.50,266.50"/>
<rect class="f" x="654.80" y="360.80" width="3.40" height="3.40"/>
<rect x="708.5" y="253.5" width="24.0" height="26.0"/>
<rect x="711.5" y="256.5" width="18.0" height="10.0"/>
<text transform="translate(720.5,287.5) scale(0.89,1)" x="0" y="0" font-size="8.4" text-anchor="middle" fill="#000" stroke="#000" stroke-width="0.22" >Scope8</text>
<path d="M656.5,362.5 L652.5,362.5 L652.5,450.5 L680.5,450.5 L680.5,462.5 L686,462.5" />
<path class="f" d="M690.00,464.00 L688.00,464.00 L688.00,465.00 L686.00,465.00 L686.00,466.00 L684.00,466.00 L684.00,459.00 L686.00,459.00 L686.00,460.00 L688.00,460.00 L688.00,461.00 L690.00,461.00 Z"/>
<path d="M689.00,462.50 L692.50,462.50"/>
<rect x="692.5" y="456.5" width="24.0" height="24.0"/>
<text transform="translate(704.5,471) scale(0.89,1)" x="0" y="0" font-size="7" text-anchor="middle" fill="#000" stroke="#000" stroke-width="0.22" >&gt;</text>
<text transform="translate(704.5,490) scale(0.89,1)" x="0" y="0" font-size="8.4" text-anchor="middle" fill="#000" stroke="#000" stroke-width="0.22" >Relational</text>
<text transform="translate(704.5,500) scale(0.89,1)" x="0" y="0" font-size="8.4" text-anchor="middle" fill="#000" stroke="#000" stroke-width="0.22" >Operator</text>
<path d="M716.5,470.5 L740.5,470.5 L740.5,414.5 L812.5,414.5 L812.5,330.5 L864.5,330.5 L864.5,334.5 L1032.5,334.5 L1032.5,382" />
<rect class="f" x="862.80" y="328.80" width="3.40" height="3.40"/>
<rect class="f" x="918.80" y="332.80" width="3.40" height="3.40"/>
<path class="f" d="M1031.70,389.50 L1029.00,383.00 L1036.00,383.00 L1033.30,389.50 Z"/>
<rect x="604.5" y="494.5" width="24.0" height="24.0"/>
<path d="M606.5,516.5 L613.5,496.5 L613.5,516.5 M613.5,514 L619.5,496.5 L619.5,516.5 M619.5,514 L626.5,496.5 L626.5,516.5" stroke-width="1.1"/>
<text transform="translate(615.5,528) scale(0.89,1)" x="0" y="0" font-size="8.4" text-anchor="middle" fill="#000" stroke="#000" stroke-width="0.22" >Repeating</text>
<text transform="translate(615.5,537) scale(0.89,1)" x="0" y="0" font-size="8.4" text-anchor="middle" fill="#000" stroke="#000" stroke-width="0.22" >Output values [0 1]</text>
<path d="M628.5,506.5 L680.5,506.5 L680.5,514.5 L686,514.5" />
<path class="f" d="M690.00,516.00 L688.00,516.00 L688.00,517.00 L686.00,517.00 L686.00,518.00 L684.00,518.00 L684.00,511.00 L686.00,511.00 L686.00,512.00 L688.00,512.00 L688.00,513.00 L690.00,513.00 Z"/>
<path d="M689.00,514.50 L692.50,514.50"/>
<rect class="f" x="642.80" y="504.80" width="3.40" height="3.40"/>
<path d="M644.5,506.5 L644.5,474.5 L686,474.5" />
<path class="f" d="M690.00,476.00 L688.00,476.00 L688.00,477.00 L686.00,477.00 L686.00,478.00 L684.00,478.00 L684.00,471.00 L686.00,471.00 L686.00,472.00 L688.00,472.00 L688.00,473.00 L690.00,473.00 Z"/>
<path d="M689.00,474.50 L692.50,474.50"/>
<rect x="692.5" y="501.5" width="24.0" height="26.0"/>
<rect x="695.5" y="504.5" width="18.0" height="10.0"/>
<text transform="translate(704.5,535.5) scale(0.89,1)" x="0" y="0" font-size="8.4" text-anchor="middle" fill="#000" stroke="#000" stroke-width="0.22" >Scope5</text>
<path d="M860.5,330.5 L860.5,363" />
<path class="f" d="M859.70,367.50 L857.00,361.00 L864.00,361.00 L861.30,367.50 Z"/>
<path d="M860.50,366.50 L860.50,370.00"/>
<rect x="847.5" y="370.5" width="26.0" height="24.0"/>
<text transform="translate(860.5,385.5) scale(0.89,1)" x="0" y="0" font-size="8.4" text-anchor="middle" fill="#000" stroke="#000" stroke-width="0.22" >NOT</text>
<path d="M860.5,394.5 L860.5,406.5 L912.5,406.5 L912.5,378.5 L1000.5,378.5 L1000.5,258.5 L1036.5,258.5 L1036.5,263" />
<path class="f" d="M1035.70,269.50 L1033.00,263.00 L1040.00,263.00 L1037.30,269.50 Z"/>
<rect class="f" x="930.80" y="376.80" width="3.40" height="3.40"/>
<path d="M928.5,378.5 L928.5,383" />
<path class="f" d="M927.70,389.50 L925.00,383.00 L932.00,383.00 L929.30,389.50 Z"/>
<path d="M920.5,334.5 L920.5,258.5 L936.5,258.5 L936.5,263" />
<path class="f" d="M935.70,269.50 L933.00,263.00 L940.00,263.00 L937.30,269.50 Z"/>
<rect x="928.5" y="270.5" width="32.0" height="44.0"/>
<rect class="f" x="950.00" y="264.00" width="4" height="4"/><rect x="951.00" y="265.00" width="1" height="2" fill="#fff" stroke="none"/>
<rect class="f" x="942.00" y="316.00" width="4" height="4"/><rect x="943.00" y="317.00" width="1" height="2" fill="#fff" stroke="none"/>
<g transform="translate(928.5,270.5)" stroke-width="1"><path d="M1.5,22 L13,22 M13,17 L13,26.5 M15,11.5 L15,31 M15,17 L23,13 M23,7.5 L23,13.5 M23,12 L29,12 L29,18.5 M27,18.5 L30,18.5 L30,25 L27,25 Z M29,25 L29,32 L23,32 M15,25.5 L21,28.8 M23,29.5 L23,36"/><path d="M17.5,29 L21.5,26.5 M19.5,26 L20.5,30" stroke-width="1.1"/><text fill="#000" stroke="#000" stroke-width="0.3" x="0" y="0" font-size="5.5" transform="translate(10,4.3) rotate(90)" text-anchor="middle" dy="2">g</text><text fill="#000" stroke="#000" stroke-width="0.3" x="0" y="0" font-size="5.5" transform="translate(25,4.3) rotate(90)" text-anchor="middle" dy="2">C</text><text fill="#000" stroke="#000" stroke-width="0.3" x="0" y="0" font-size="5.5" transform="translate(17,38.3) rotate(-90)" text-anchor="middle" dy="2">E</text></g>
<rect x="1028.5" y="270.5" width="32.0" height="44.0"/>
<rect class="f" x="1050.00" y="264.00" width="4" height="4"/><rect x="1051.00" y="265.00" width="1" height="2" fill="#fff" stroke="none"/>
<rect class="f" x="1042.00" y="316.00" width="4" height="4"/><rect x="1043.00" y="317.00" width="1" height="2" fill="#fff" stroke="none"/>
<g transform="translate(1028.5,270.5)" stroke-width="1"><path d="M1.5,22 L13,22 M13,17 L13,26.5 M15,11.5 L15,31 M15,17 L23,13 M23,7.5 L23,13.5 M23,12 L29,12 L29,18.5 M27,18.5 L30,18.5 L30,25 L27,25 Z M29,25 L29,32 L23,32 M15,25.5 L21,28.8 M23,29.5 L23,36"/><path d="M17.5,29 L21.5,26.5 M19.5,26 L20.5,30" stroke-width="1.1"/><text fill="#000" stroke="#000" stroke-width="0.3" x="0" y="0" font-size="5.5" transform="translate(10,4.3) rotate(90)" text-anchor="middle" dy="2">g</text><text fill="#000" stroke="#000" stroke-width="0.3" x="0" y="0" font-size="5.5" transform="translate(25,4.3) rotate(90)" text-anchor="middle" dy="2">C</text><text fill="#000" stroke="#000" stroke-width="0.3" x="0" y="0" font-size="5.5" transform="translate(17,38.3) rotate(-90)" text-anchor="middle" dy="2">E</text></g>
<rect x="920.5" y="390.5" width="32.0" height="44.0"/>
<rect class="f" x="942.00" y="384.00" width="4" height="4"/><rect x="943.00" y="385.00" width="1" height="2" fill="#fff" stroke="none"/>
<rect class="f" x="934.00" y="436.00" width="4" height="4"/><rect x="935.00" y="437.00" width="1" height="2" fill="#fff" stroke="none"/>
<g transform="translate(920.5,390.5)" stroke-width="1"><path d="M1.5,22 L13,22 M13,17 L13,26.5 M15,11.5 L15,31 M15,17 L23,13 M23,7.5 L23,13.5 M23,12 L29,12 L29,18.5 M27,18.5 L30,18.5 L30,25 L27,25 Z M29,25 L29,32 L23,32 M15,25.5 L21,28.8 M23,29.5 L23,36"/><path d="M17.5,29 L21.5,26.5 M19.5,26 L20.5,30" stroke-width="1.1"/><text fill="#000" stroke="#000" stroke-width="0.3" x="0" y="0" font-size="5.5" transform="translate(10,4.3) rotate(90)" text-anchor="middle" dy="2">g</text><text fill="#000" stroke="#000" stroke-width="0.3" x="0" y="0" font-size="5.5" transform="translate(25,4.3) rotate(90)" text-anchor="middle" dy="2">C</text><text fill="#000" stroke="#000" stroke-width="0.3" x="0" y="0" font-size="5.5" transform="translate(17,38.3) rotate(-90)" text-anchor="middle" dy="2">E</text></g>
<rect x="1024.5" y="390.5" width="32.0" height="44.0"/>
<rect class="f" x="1046.00" y="384.00" width="4" height="4"/><rect x="1047.00" y="385.00" width="1" height="2" fill="#fff" stroke="none"/>
<rect class="f" x="1038.00" y="436.00" width="4" height="4"/><rect x="1039.00" y="437.00" width="1" height="2" fill="#fff" stroke="none"/>
<g transform="translate(1024.5,390.5)" stroke-width="1"><path d="M1.5,22 L13,22 M13,17 L13,26.5 M15,11.5 L15,31 M15,17 L23,13 M23,7.5 L23,13.5 M23,12 L29,12 L29,18.5 M27,18.5 L30,18.5 L30,25 L27,25 Z M29,25 L29,32 L23,32 M15,25.5 L21,28.8 M23,29.5 L23,36"/><path d="M17.5,29 L21.5,26.5 M19.5,26 L20.5,30" stroke-width="1.1"/><text fill="#000" stroke="#000" stroke-width="0.3" x="0" y="0" font-size="5.5" transform="translate(10,4.3) rotate(90)" text-anchor="middle" dy="2">g</text><text fill="#000" stroke="#000" stroke-width="0.3" x="0" y="0" font-size="5.5" transform="translate(25,4.3) rotate(90)" text-anchor="middle" dy="2">C</text><text fill="#000" stroke="#000" stroke-width="0.3" x="0" y="0" font-size="5.5" transform="translate(17,38.3) rotate(-90)" text-anchor="middle" dy="2">E</text></g>
<rect class="f" x="978.00" y="264.00" width="4" height="4"/><rect x="979.00" y="265.00" width="1" height="2" fill="#fff" stroke="none"/>
<rect class="f" x="978.00" y="316.00" width="4" height="4"/><rect x="979.00" y="317.00" width="1" height="2" fill="#fff" stroke="none"/>
<g transform="translate(980.5,270.5)" stroke-width="1"><path d="M0,0 L0,14 M0,28 L0,41.5 M-7,14 L6,14 M0,14 L-7,28 L6,28 Z M0,4 L10,4 L10,15 M9,15 L12,15 L12,30 L9,30 Z M10,30 L10,41 L0,41"/></g>
<rect class="f" x="1078.00" y="264.00" width="4" height="4"/><rect x="1079.00" y="265.00" width="1" height="2" fill="#fff" stroke="none"/>
<rect class="f" x="1078.00" y="316.00" width="4" height="4"/><rect x="1079.00" y="317.00" width="1" height="2" fill="#fff" stroke="none"/>
<g transform="translate(1080.5,270.5)" stroke-width="1"><path d="M0,0 L0,14 M0,28 L0,41.5 M-7,14 L6,14 M0,14 L-7,28 L6,28 Z M0,4 L10,4 L10,15 M9,15 L12,15 L12,30 L9,30 Z M10,30 L10,41 L0,41"/></g>
<rect class="f" x="978.00" y="384.00" width="4" height="4"/><rect x="979.00" y="385.00" width="1" height="2" fill="#fff" stroke="none"/>
<rect class="f" x="978.00" y="436.00" width="4" height="4"/><rect x="979.00" y="437.00" width="1" height="2" fill="#fff" stroke="none"/>
<g transform="translate(980.5,390.5)" stroke-width="1"><path d="M0,0 L0,14 M0,28 L0,41.5 M-7,14 L6,14 M0,14 L-7,28 L6,28 Z M0,4 L10,4 L10,15 M9,15 L12,15 L12,30 L9,30 Z M10,30 L10,41 L0,41"/></g>
<rect class="f" x="1078.00" y="384.00" width="4" height="4"/><rect x="1079.00" y="385.00" width="1" height="2" fill="#fff" stroke="none"/>
<rect class="f" x="1078.00" y="436.00" width="4" height="4"/><rect x="1079.00" y="437.00" width="1" height="2" fill="#fff" stroke="none"/>
<g transform="translate(1080.5,390.5)" stroke-width="1"><path d="M0,0 L0,14 M0,28 L0,41.5 M-7,14 L6,14 M0,14 L-7,28 L6,28 Z M0,4 L10,4 L10,15 M9,15 L12,15 L12,30 L9,30 Z M10,30 L10,41 L0,41"/></g>
<path d="M952.5,242.5 L1124.5,242.5" />
<path d="M952.5,242.5 L952.5,265" />
<path d="M980.5,242.5 L980.5,264" />
<rect class="f" x="979.00" y="257.00" width="3.00" height="3.00"/>
<path d="M1052.5,242.5 L1052.5,265" />
<rect class="f" x="1051.00" y="257.00" width="3.00" height="3.00"/>
<path d="M1080.5,242.5 L1080.5,264" />
<rect class="f" x="1079.00" y="257.00" width="3.00" height="3.00"/>
<path d="M1124.5,242.5 L1124.5,269" />
<rect class="f" x="1122.00" y="268.00" width="4" height="4"/><rect x="1123.00" y="269.00" width="1" height="2" fill="#fff" stroke="none"/>
<rect class="f" x="1122.00" y="304.00" width="4" height="4"/><rect x="1123.00" y="305.00" width="1" height="2" fill="#fff" stroke="none"/>
<path d="M1124.5,274 L1124.5,286.5 M1116,286.5 L1132,286.5 M1121,289.5 L1127,289.5 M1124.5,289.5 L1124.5,302 M1118,281.5 L1121.5,281.5 M1119.7,279.7 L1119.7,283.3" stroke-width="1"/>
<text transform="translate(1135,292.5) scale(1,1)" x="0" y="0" font-size="11" text-anchor="start" fill="#000" stroke="none" letter-spacing="0.8">200</text>
<path d="M1124.5,307 L1124.5,454.5 L936.5,454.5 L936.5,439" />
<path d="M980.5,439 L980.5,454.5" />
<path d="M1040.5,439 L1040.5,454.5" />
<path d="M1080.5,439 L1080.5,454.5" />
<rect class="f" x="978.80" y="452.80" width="3.40" height="3.40"/>
<rect class="f" x="1038.80" y="452.80" width="3.40" height="3.40"/>
<rect class="f" x="1066.80" y="452.80" width="3.40" height="3.40"/>
<path d="M944.5,319 L944.5,385" />
<path d="M980.5,319 L980.5,385" />
<path d="M944.5,366.5 L980.5,366.5" />
<rect class="f" x="942.80" y="364.80" width="3.40" height="3.40"/>
<rect class="f" x="978.80" y="364.80" width="3.40" height="3.40"/>
<rect class="f" x="978.80" y="344.80" width="3.40" height="3.40"/>
<path d="M980.5,346.5 L1160.5,346.5 L1160.5,318.5 L1264.5,318.5 L1264.5,322.5 L1268.5,322.5" />
<rect class="f" x="1270.00" y="320.50" width="4" height="4"/><rect x="1271.00" y="321.50" width="1" height="2" fill="#fff" stroke="none"/>
<path d="M1044.5,319 L1044.5,378.5 L1048.5,378.5 L1048.5,385" />
<rect class="f" x="1043.00" y="357.00" width="3.00" height="3.00"/>
<rect class="f" x="1042.80" y="364.80" width="3.40" height="3.40"/>
<rect class="f" x="1043.00" y="377.00" width="3.00" height="3.00"/>
<path d="M1044.5,330.5 L1270,330.5" />
<rect class="f" x="1270.00" y="328.50" width="4" height="4"/><rect x="1271.00" y="329.50" width="1" height="2" fill="#fff" stroke="none"/>
<path d="M1044.5,366.5 L1080.5,366.5" />
<path d="M1080.5,319 L1080.5,385" />
<text transform="translate(925.5,295) scale(0.89,1)" x="0" y="0" font-size="8.4" text-anchor="end" fill="#000" stroke="#000" stroke-width="0.22" >IGBT</text>
<text transform="translate(998.3,295) scale(0.89,1)" x="0" y="0" font-size="8.4" text-anchor="start" fill="#000" stroke="#000" stroke-width="0.22" >D1</text>
<text transform="translate(1026,295) scale(0.89,1)" x="0" y="0" font-size="8.4" text-anchor="end" fill="#000" stroke="#000" stroke-width="0.22" >IGBT2</text>
<text transform="translate(1097,295) scale(0.89,1)" x="0" y="0" font-size="8.4" text-anchor="start" fill="#000" stroke="#000" stroke-width="0.22" >D3</text>
<text transform="translate(998.3,415) scale(0.89,1)" x="0" y="0" font-size="8.4" text-anchor="start" fill="#000" stroke="#000" stroke-width="0.22" >D2</text>
<text transform="translate(1026,415) scale(0.89,1)" x="0" y="0" font-size="8.4" text-anchor="end" fill="#000" stroke="#000" stroke-width="0.22" >IGBT3</text>
<text transform="translate(1097,415) scale(0.89,1)" x="0" y="0" font-size="8.4" text-anchor="start" fill="#000" stroke="#000" stroke-width="0.22" >D4</text>
<path d="M1278,316.5 L1276.5,316.5 L1276.5,336.5 L1278,336.5" stroke-width="1"/>
<rect x="1268.5" y="364.5" width="21.5" height="24.0"/>
<path d="M1269.7,370.6 L1275.3,370.6 M1272.5,367.8 L1272.5,373.40000000000003" stroke-width="1.1"/>
<path d="M1270,382.5 L1275.5,382.5" stroke-width="1.1"/>
<path d="M1278,358.5 L1256.5,358.5 L1256.5,370.5 L1262,370.5" />
<path class="f" d="M1266.00,372.00 L1264.00,372.00 L1264.00,373.00 L1262.00,373.00 L1262.00,374.00 L1260.00,374.00 L1260.00,367.00 L1262.00,367.00 L1262.00,368.00 L1264.00,368.00 L1264.00,369.00 L1266.00,369.00 Z"/>
<path d="M1265.00,370.50 L1268.50,370.50"/>
<path d="M1278,470.5 L1256.5,470.5 L1256.5,382.5 L1262,382.5" />
<path class="f" d="M1266.00,384.00 L1264.00,384.00 L1264.00,385.00 L1262.00,385.00 L1262.00,386.00 L1260.00,386.00 L1260.00,379.00 L1262.00,379.00 L1262.00,380.00 L1264.00,380.00 L1264.00,381.00 L1266.00,381.00 Z"/>
<path d="M1265.00,382.50 L1268.50,382.50"/>
<rect x="1136.5" y="134.5" width="24.0" height="24.0"/>
<text transform="translate(1148.5,149.5) scale(0.89,1)" x="0" y="0" font-size="8.4" text-anchor="middle" fill="#000" stroke="#000" stroke-width="0.22" >1</text>
<text transform="translate(1148,168) scale(0.89,1)" x="0" y="0" font-size="8.4" text-anchor="middle" fill="#000" stroke="#000" stroke-width="0.22" >Constant</text>
<path d="M1160.5,146.5 L1164.5,146.5 L1164.5,210.5 L1194,210.5" />
<path class="f" d="M1198.00,212.00 L1196.00,212.00 L1196.00,213.00 L1194.00,213.00 L1194.00,214.00 L1192.00,214.00 L1192.00,207.00 L1194.00,207.00 L1194.00,208.00 L1196.00,208.00 L1196.00,209.00 L1198.00,209.00 Z"/>
<path d="M1197.00,210.50 L1200.50,210.50"/>
<rect x="1200.5" y="196.5" width="48.0" height="28.0"/>
<text transform="translate(1224.5,206) scale(0.89,1)" x="0" y="0" font-size="8.4" text-anchor="middle" fill="#000" stroke="#000" stroke-width="0.22" >1</text>
<path d="M1212,210.5 L1237,210.5" />
<text transform="translate(1224.5,221) scale(0.89,1)" x="0" y="0" font-size="8.4" text-anchor="middle" fill="#000" stroke="#000" stroke-width="0.22" >Le.s+R</text>
<text transform="translate(1224,234) scale(0.89,1)" x="0" y="0" font-size="8.4" text-anchor="middle" fill="#000" stroke="#000" stroke-width="0.22" >Transfer Fcn</text>
<path d="M1248.5,210.5 L1278,210.5" />
<text transform="translate(1045,580) scale(0.89,1)" x="0" y="0" font-size="8.4" text-anchor="middle" fill="#000" stroke="#000" stroke-width="0.22" >Ea</text></g></svg>
<div id="status" class="abs"><span style="left:2px;top:4px">Ready</span>
<div class="pan" style="left:917px;width:70px"><span style="left:1px;top:0px">80%</span></div>
<div class="pan" style="left:989px;width:70px"></div>
<div class="pan" style="left:1061px;width:78px"></div>
<div class="pan" style="left:1141px;width:139px"><span style="left:2px;top:0px">ode45</span></div>
</div>
<div id="task" class="abs"></div>
<svg class="abs" style="left:0;top:770px" width="1280" height="30" viewBox="0 770 1280 30"><defs><linearGradient id="btnA" x1="0" y1="0" x2="0" y2="1"><stop offset="0" stop-color="#c8c4c4"/><stop offset="0.5" stop-color="#8a8282"/><stop offset="1" stop-color="#4a3e3e"/></linearGradient><linearGradient id="btnB" x1="0" y1="0" x2="0" y2="1"><stop offset="0" stop-color="#6a6060"/><stop offset="0.5" stop-color="#3e3434"/><stop offset="1" stop-color="#2a2020"/></linearGradient><radialGradient id="ff" cx="0.55" cy="0.4" r="0.6"><stop offset="0" stop-color="#3aa0e8"/><stop offset="0.5" stop-color="#2060b0"/><stop offset="1" stop-color="#10306a"/></radialGradient><linearGradient id="apl" x1="0" y1="0" x2="0" y2="1"><stop offset="0" stop-color="#e8f0ff"/><stop offset="0.45" stop-color="#5080ff"/><stop offset="1" stop-color="#0010c0"/></linearGradient></defs><rect x="0" y="770" width="1280" height="30" fill="#170d0d"/><rect x="0" y="770" width="1280" height="1" fill="#4e4040"/><rect x="600" y="771" width="400" height="29" fill="#241212" opacity="0.6"/><path d="M27.5,778.5 C24,777 20,779 20,783.5 C20,788 23,791 25,791 C26.5,791 27,790.3 28,790.3 C29,790.3 29.7,791 31,791 C33,791 35,788 35,786.5 C33,785.5 32.3,783.5 33.5,781.3 C32.5,779 30,778 27.5,778.5 Z" fill="url(#apl)"/><path d="M27.5,777.5 C27.5,775 29,773.5 31,773 C31,775.5 29.5,777 27.5,777.5 Z" fill="#3060e0"/><rect x="58" y="775" width="1" height="1" fill="#7a7070"/><rect x="61" y="775" width="1" height="1" fill="#7a7070"/><rect x="64" y="775" width="1" height="1" fill="#7a7070"/><rect x="58" y="779" width="1" height="1" fill="#7a7070"/><rect x="61" y="779" width="1" height="1" fill="#7a7070"/><rect x="64" y="779" width="1" height="1" fill="#7a7070"/><rect x="58" y="783" width="1" height="1" fill="#7a7070"/><rect x="61" y="783" width="1" height="1" fill="#7a7070"/><rect x="64" y="783" width="1" height="1" fill="#7a7070"/><rect x="58" y="787" width="1" height="1" fill="#7a7070"/><rect x="61" y="787" width="1" height="1" fill="#7a7070"/><rect x="64" y="787" width="1" height="1" fill="#7a7070"/><rect x="58" y="791" width="1" height="1" fill="#7a7070"/><rect x="61" y="791" width="1" height="1" fill="#7a7070"/><rect x="64" y="791" width="1" height="1" fill="#7a7070"/><rect x="58" y="795" width="1" height="1" fill="#7a7070"/><rect x="61" y="795" width="1" height="1" fill="#7a7070"/><rect x="64" y="795" width="1" height="1" fill="#7a7070"/><rect x="997" y="775" width="1" height="1" fill="#7a7070"/><rect x="1000" y="775" width="1" height="1" fill="#7a7070"/><rect x="1003" y="775" width="1" height="1" fill="#7a7070"/><rect x="997" y="779" width="1" height="1" fill="#7a7070"/><rect x="1000" y="779" width="1" height="1" fill="#7a7070"/><rect x="1003" y="779" width="1" height="1" fill="#7a7070"/><rect x="997" y="783" width="1" height="1" fill="#7a7070"/><rect x="1000" y="783" width="1" height="1" fill="#7a7070"/><rect x="1003" y="783" width="1" height="1" fill="#7a7070"/><rect x="997" y="787" width="1" height="1" fill="#7a7070"/><rect x="1000" y="787" width="1" height="1" fill="#7a7070"/><rect x="1003" y="787" width="1" height="1" fill="#7a7070"/><rect x="997" y="791" width="1" height="1" fill="#7a7070"/><rect x="1000" y="791" width="1" height="1" fill="#7a7070"/><rect x="1003" y="791" width="1" height="1" fill="#7a7070"/><rect x="997" y="795" width="1" height="1" fill="#7a7070"/><rect x="1000" y="795" width="1" height="1" fill="#7a7070"/><rect x="1003" y="795" width="1" height="1" fill="#7a7070"/><circle cx="97" cy="785" r="8" fill="#e06a10"/><circle cx="98.8" cy="783.5" r="5.6" fill="url(#ff)"/><path d="M89,784 C90,779 94,777 97,778 C95,780 94,782 95,785 C96,788 100,789 103,787 C101,792 93,793 90,788 Z" fill="#f08a20"/><path d="M91,780 L91.5,776 L95,778.5 Z" fill="#f0a030"/><path d="M135,778 L141,778 L142.5,779.5 L151,779.5 L151,793 L135,793 Z" fill="#e8c860"/><rect x="135" y="782" width="16" height="11" fill="#f8e090"/><path d="M139,793 L139,787 L147,787 L147,793 L145,793 L145,789 L141,789 L141,793 Z" fill="#40a0e0"/><circle cx="188.5" cy="785" r="7.5" fill="#2a70c8"/><circle cx="188.5" cy="785" r="5" fill="#5aa0e8"/><path d="M183,784 L190,781 L194,786 L188,790 Z" fill="#f0f0f0"/><rect x="214.5" y="771.5" width="34" height="27" rx="2" fill="url(#btnA)" stroke="#d8d4d4" stroke-width="1"/><path d="M222,787 L228,784 L231,779 L234.5,777 L238,784 L241,790 L236,788 L233,792 L230,786 Z" fill="#e06020"/><path d="M222,787 L228,784 L231,786 L226,789 Z" fill="#3080d0"/><rect x="252" y="772" width="3" height="26" fill="#5a5050"/><rect x="258" y="772" width="1" height="26" fill="#4a4040"/><rect x="260.5" y="771.5" width="36" height="27" rx="2" fill="url(#btnB)" stroke="#6a6060" stroke-width="1"/><circle cx="278.5" cy="785" r="8" fill="#e06a10"/><circle cx="280.3" cy="783.5" r="5.6" fill="url(#ff)"/><path d="M270.5,784 C271.5,779 275.5,777 278.5,778 C276.5,780 275.5,782 276.5,785 C277.5,788 281.5,789 284.5,787 C282.5,792 274.5,793 271.5,788 Z" fill="#f08a20"/><path d="M272.5,780 L273.0,776 L276.5,778.5 Z" fill="#f0a030"/><rect x="299" y="772" width="2" height="26" fill="#4a4040"/><text x="1017" y="787" font-size="11" fill="#f0f0f0" font-family="Liberation Sans">IT</text><path d="M1046,788 L1049.5,784.5 L1053,788 Z" fill="#f0f0f0"/><ellipse cx="1074" cy="785.8" rx="6.5" ry="8" fill="#1a5ec0"/><path d="M1071.5,782 L1076.5,787 L1074,789.5 L1074,780 L1076.5,782.5 L1071.5,788" fill="none" stroke="#fff" stroke-width="1.2"/><rect x="1090" y="778" width="16" height="15.5" rx="6" fill="#2a58c0"/><path d="M1093,782 L1096,785 M1095,780 L1095,786 M1097,791 L1103,781" stroke="#fff" stroke-width="1.2"/><circle cx="1101" cy="788" r="2.5" fill="none" stroke="#fff" stroke-width="1"/><path d="M1115.5,778 L1115.5,793" stroke="#f0f0f0" stroke-width="1.2"/><path d="M1116,779 L1121,779 L1122,781 L1128,781 L1125.5,784 L1128,787 L1121,787 L1120,785 L1116,785 Z" fill="#f0f0f0"/><rect x="1139.5" y="781.5" width="9" height="11" fill="none" stroke="#f0f0f0" stroke-width="1.5"/><rect x="1143" y="783" width="7" height="6" fill="#f0f0f0"/><rect x="1150" y="784.5" width="3" height="1.5" fill="#f0f0f0"/><rect x="1150" y="787" width="3" height="1.5" fill="#f0f0f0"/><rect x="1163" y="789" width="2" height="2" fill="#f0f0f0"/><rect x="1166" y="787" width="2" height="4" fill="#f0f0f0"/><rect x="1169" y="785" width="2" height="6" fill="#f0f0f0"/><rect x="1172" y="782" width="2" height="9" fill="#f0f0f0"/><rect x="1175" y="779" width="2" height="12" fill="#f0f0f0"/><text transform="translate(1211.5,789.5) scale(0.93,1)" font-size="12.5" fill="#f4f4f4" stroke="#f4f4f4" stroke-width="0.35" font-family="Liberation Sans">18:27</text><rect x="1266.5" y="771.5" width="13" height="28" fill="#3a3030" stroke="#8a8080" stroke-width="1"/><path d="M1267,790 Q1270,780 1279,778 L1279,772 L1267,772 Z" fill="#6a6060"/></svg>
</body></html>
